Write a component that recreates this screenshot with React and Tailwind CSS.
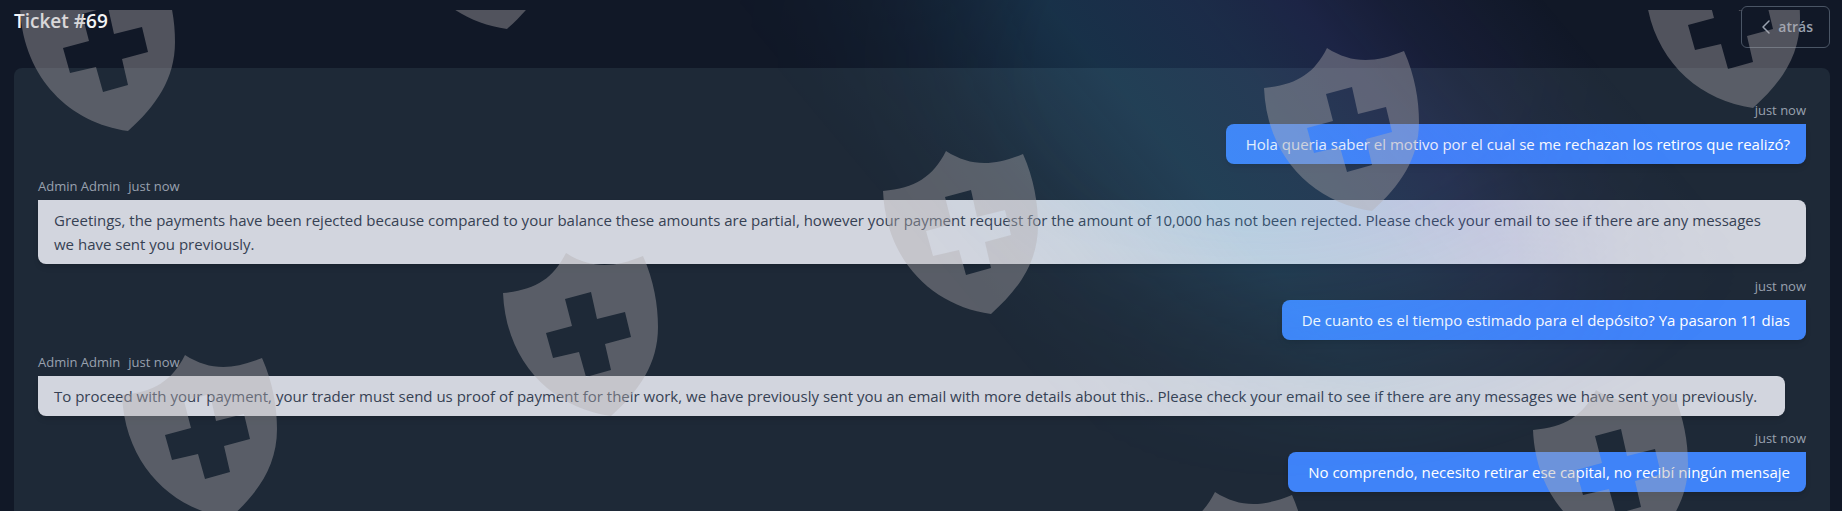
import { FiChevronLeft } from "react-icons/fi";

const messages = [
  { id: 1, from: "me", time: "just now", text: "Hola queria saber el motivo por el cual se me rechazan los retiros que realizó?" },
  { id: 2, from: "admin", name: "Admin Admin", time: "just now", text: "Greetings, the payments have been rejected because compared to your balance these amounts are partial, however your payment request for the amount of 10,000 has not been rejected. Please check your email to see if there are any messages we have sent you previously." },
  { id: 3, from: "me", time: "just now", text: "De cuanto es el tiempo estimado para el depósito? Ya pasaron 11 dias" },
  { id: 4, from: "admin", name: "Admin Admin", time: "just now", text: "To proceed with your payment, your trader must send us proof of payment for their work, we have previously sent you an email with more details about this.. Please check your email to see if there are any messages we have sent you previously." },
  { id: 5, from: "me", time: "just now", text: "No comprendo, necesito retirar ese capital, no recibí ningún mensaje" },
];

// top-left corner of every shield, the layer itself starts 10px below the top
const shields = [
  [20, -42],
  [399, -144],
  [1645, -65],
  [1264, 38],
  [883, 141],
  [503, 243],
  [122, 345],
  [1533, 380],
  [1152, 482],
];

function Shield({ x, y }) {
  return (
    <path
      transform={`translate(${x} ${y})`}
      fillRule="evenodd"
      d="M0 40 C32 37 50 26 63 0 C88 16 111 15 140 3 C151 28 155 52 155 74 C155 111 136 138 108 163 C50 155 3 110 0 40 Z M62 46 L88 39 L94 66 L122 59 L128 84 L102 91 L108 117 L83 124 L76 99 L50 105 L43 80 L69 73 Z"
    />
  );
}

function Message({ message }) {
  const mine = message.from === "me";
  return (
    <li className={mine ? "flex flex-col items-end gap-1" : "flex flex-col items-start gap-1"}>
      <div className="flex gap-2 text-[13px] leading-5 text-gray-400">
        {message.name && <span>{message.name}</span>}
        <span>{message.time}</span>
      </div>
      <p
        className={
          mine
            ? "rounded-lg rounded-tr-none bg-[#3f83f8] py-2 pr-4 pl-5 text-white shadow-md"
            : "rounded-lg rounded-tl-none bg-[#d2d5de] py-2 pr-7 pl-4 text-gray-700 shadow-md"
        }
      >
        {message.text}
      </p>
    </li>
  );
}

function App() {
  return (
    <div className="relative h-screen overflow-hidden bg-[#111827] pt-1.5 pr-3 pl-3.5 font-['Open_Sans',sans-serif] text-[15px] leading-6">
      <header className="mb-5 flex items-start justify-between">
        <h1 className="pt-[3px] text-[19px] leading-6 font-semibold text-gray-100">Ticket #69</h1>
        <button className="flex h-[42px] items-center rounded-md border border-gray-600 pr-4 pl-3 text-sm font-semibold text-gray-400">
          <FiChevronLeft className="size-6" strokeWidth={1.5} />
          atrás
        </button>
      </header>

      <main className="rounded-lg bg-[#1e2937] px-6 pt-8 pb-10">
        <ul className="flex flex-col gap-3">
          {messages.map((message) => (
            <Message key={message.id} message={message} />
          ))}
        </ul>
      </main>

      {/* glow */}
      <div className="pointer-events-none absolute inset-0 bg-[linear-gradient(50deg,#3bb0f000_50%,#3bb0f012_57%,#3bb0f02b_65%,#4f94f02b_71%,#5f6cf126_76%,#6366f114_80%,#6366f100_87%)] [mask-image:radial-gradient(580px_420px_at_69%_12%,#000_40%,transparent)]" />

      {/* watermark */}
      <svg className="pointer-events-none absolute inset-x-0 top-2.5 h-full w-full" fill="#b1adb0" fillOpacity="0.4" aria-hidden="true">
        {shields.map(([x, y]) => (
          <Shield key={`${x}-${y}`} x={x} y={y} />
        ))}
      </svg>
    </div>
  );
}

export default App;
